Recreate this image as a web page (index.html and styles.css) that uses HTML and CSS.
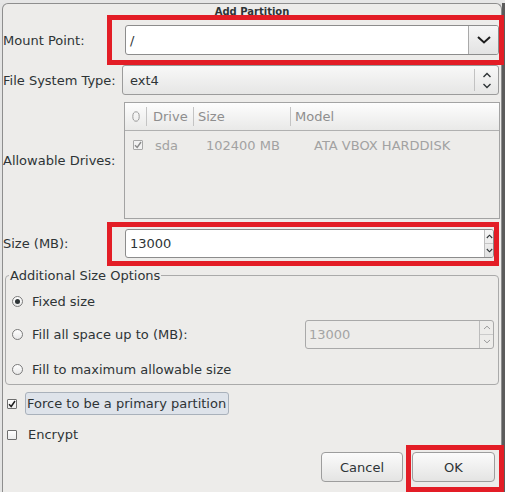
FILE: index.html
```html
<!DOCTYPE html>
<html>
<head>
<meta charset="utf-8">
<title>Add Partition</title>
<link rel="stylesheet" href="styles.css">
</head>
<body>
<div class="screen">
  <div class="topstrip"></div>
  <div class="main">
    <div class="dialog">
      <div class="title">Add Partition</div>
      <div class="form">
        <div class="row r-mount">
          <div class="label">Mount Point:</div>
          <div class="combo-entry">
            <div class="entry-text">/</div>
            <div class="combo-btn">
              <svg width="14" height="8" viewBox="0 0 14 8"><polyline points="1,1 7,6.5 13,1" fill="none" stroke="#1e1e1e" stroke-width="2"/></svg>
            </div>
          </div>
        </div>
        <div class="row r-fs">
          <div class="label">File System Type:</div>
          <div class="combo">
            <div class="combo-text">ext4</div>
            <div class="combo-sep"></div>
            <div class="combo-arrows">
              <svg width="10" height="17" viewBox="0 0 10 17"><polyline points="1.5,5 5,1.5 8.5,5" fill="none" stroke="#2e3436" stroke-width="1.4"/><polyline points="1.5,12 5,15.5 8.5,12" fill="none" stroke="#2e3436" stroke-width="1.4"/></svg>
            </div>
          </div>
        </div>
        <div class="row r-tree">
          <div class="label">Allowable Drives:</div>
          <div class="tree">
            <div class="thead">
              <div class="hc hc1"><svg width="8" height="11" viewBox="0 0 8 11"><ellipse cx="4" cy="5.5" rx="3.2" ry="4.7" fill="none" stroke="#9a9a9a" stroke-width="1"/></svg></div>
              <div class="hsep"></div>
              <div class="hc hc2">Drive</div>
              <div class="hsep"></div>
              <div class="hc hc3">Size</div>
              <div class="hsep"></div>
              <div class="hc hc4">Model</div>
            </div>
            <div class="trow">
              <div class="tc tc1"><span class="cb cb-dis"><svg width="8" height="8" viewBox="0 0 8 8"><polyline points="1,4.2 3.2,6.5 7,1" fill="none" stroke="#8a8a8a" stroke-width="1.4"/></svg></span></div>
              <div class="tc tc2">sda</div>
              <div class="tc tc3">102400 MB</div>
              <div class="tc tc4">ATA VBOX HARDDISK</div>
            </div>
          </div>
        </div>
        <div class="row r-size">
          <div class="label">Size (MB):</div>
          <div class="spin">
            <div class="spin-text">13000</div>
            <div class="spin-btns">
              <div class="sb"><svg width="7" height="5" viewBox="0 0 7 5"><polyline points="0.8,4 3.5,1.2 6.2,4" fill="none" stroke="#2e3436" stroke-width="1.1"/></svg></div>
              <div class="sb sb-down"><svg width="7" height="5" viewBox="0 0 7 5"><polyline points="0.8,1 3.5,3.8 6.2,1" fill="none" stroke="#2e3436" stroke-width="1.1"/></svg></div>
            </div>
          </div>
        </div>
        <fieldset class="frame">
          <legend>Additional Size Options</legend>
          <div class="opt opt1"><span class="radio checked"></span><span class="opt-text">Fixed size</span></div>
          <div class="opt opt2"><span class="radio"></span><span class="opt-text">Fill all space up to (MB):</span>
            <div class="spin-dis">
              <div class="spin-dis-text">13000</div>
              <div class="spin-dis-btns">
                <div class="sdb"><svg width="8" height="5" viewBox="0 0 8 5"><polyline points="1,4 4,1.2 7,4" fill="none" stroke="#9a9a9a" stroke-width="1"/></svg></div>
                <div class="sdb sdb-down"><svg width="8" height="5" viewBox="0 0 8 5"><polyline points="1,1 4,3.8 7,1" fill="none" stroke="#9a9a9a" stroke-width="1"/></svg></div>
              </div>
            </div>
          </div>
          <div class="opt opt3"><span class="radio"></span><span class="opt-text">Fill to maximum allowable size</span></div>
        </fieldset>
        <div class="chk chk-force">
          <span class="cb"><svg width="8" height="8" viewBox="0 0 8 8"><polyline points="1,4.2 3.2,6.5 7,1" fill="none" stroke="#1e1e1e" stroke-width="1.5"/></svg></span>
          <span class="chk-label focus">Force to be a primary partition</span>
        </div>
        <div class="chk chk-enc">
          <span class="cb"></span>
          <span class="chk-label">Encrypt</span>
        </div>
        <div class="buttons">
          <div class="btn btn-cancel">Cancel</div>
          <div class="btn btn-ok">OK</div>
        </div>
      </div>
    </div>
    <div class="rstrip"></div>
  </div>
  <div class="annot annot-mount"></div>
  <div class="annot annot-size"></div>
  <div class="annot annot-ok"></div>
</div>
</body>
</html>
```

FILE: styles.css
```css
* { box-sizing: border-box; }
html, body { margin: 0; padding: 0; }
body {
  font-family: "DejaVu Sans", "Liberation Sans", sans-serif;
  font-size: 13px;
  color: #2e3436;
  background: #e2e2e2;
}
.screen {
  position: relative;
  width: 505px;
  height: 492px;
  overflow: hidden;
  display: flex;
  flex-direction: column;
  background: #e4e4e4;
}
.topstrip { height: 3px; flex: none; background: #e6e6e6; }
.main { flex: 1; display: flex; min-height: 0; }
.dialog {
  width: 500px;
  flex: none;
  margin-left: 2px;
  border: 1px solid #8e8e8e;
  border-bottom: none;
  border-radius: 6px 6px 0 0;
  background: #edecea;
  display: flex;
  flex-direction: column;
}
.rstrip { flex: 1; background: #5c5c5c; }

.title {
  height: 17px;
  padding-top: 2px;
  line-height: 12px;
  font-size: 10px;
  font-weight: bold;
  text-align: center;
  color: #2e3436;
}

.form { display: flex; flex-direction: column; padding-right: 2px; }
.row { display: flex; align-items: center; }
.label { width: 122px; flex: none; line-height: 15px; }

.r-mount { margin-top: 4px; height: 30px; }
.combo-entry {
  flex: 1;
  height: 30px;
  display: flex;
  border: 1px solid #8c8c8c;
  border-radius: 3px;
  background: #ffffff;
  overflow: hidden;
}
.entry-text { flex: 1; padding-left: 4px; display: flex; align-items: center; }
.combo-btn {
  width: 30px;
  border-left: 1px solid #a9a9a9;
  background: linear-gradient(#f6f6f6, #e3e3e3);
  display: flex;
  align-items: center;
  justify-content: center;
  padding-left: 1px;
}

.r-fs { margin-top: 10px; height: 30px; }
.combo {
  flex: 1;
  margin-left: -3px;
  height: 30px;
  display: flex;
  border: 1px solid #9b9b9b;
  border-radius: 3px;
  background: linear-gradient(#f8f8f8, #e6e6e5);
}
.combo-text { flex: 1; padding-left: 7px; display: flex; align-items: center; }
.combo-sep { width: 1px; background: #c2c2c2; margin: 3px 0; }
.combo-arrows { width: 23px; display: flex; align-items: center; justify-content: center; }

.r-tree { margin-top: 7px; height: 117px; }
.tree {
  flex: 1;
  margin-left: -1px;
  margin-right: -1px;
  height: 117px;
  border: 1px solid #a3a3a3;
  background: #edecea;
}
.thead {
  height: 28px;
  display: flex;
  align-items: center;
  border-bottom: 1px solid #b0b0b0;
  background: linear-gradient(#fdfdfd, #e9e9e8);
  color: #8e8e8e;
}
.hc { height: 100%; display: flex; align-items: center; }
.hc1 { width: 21px; justify-content: center; padding-left: 1px; }
.hc2 { width: 46px; padding-left: 6px; }
.hc3 { width: 96px; padding-left: 4px; }
.hc4 { flex: 1; padding-left: 4px; }
.hsep { width: 1px; height: 19px; background: #c4c4c4; }
.trow { height: 28px; display: flex; align-items: center; color: #a2a2a2; }
.tc { display: flex; align-items: center; }
.tc1 { width: 30px; padding-left: 8px; }
.tc2 { width: 51px; }
.tc3 { width: 108px; }
.tc4 { flex: 1; }

.cb {
  width: 10px;
  height: 10px;
  flex: none;
  border: 1px solid #6e6e6e;
  border-radius: 1px;
  background: linear-gradient(#ffffff, #ececec);
  display: flex;
  align-items: center;
  justify-content: center;
}
.cb-dis { border-color: #a8a8a8; background: #f2f2f2; }

.r-size { margin-top: 10px; height: 29px; }
.spin {
  flex: 1;
  margin-right: 5px;
  height: 29px;
  display: flex;
  border: 1px solid #8c8c8c;
  border-radius: 3px;
  background: #ffffff;
  overflow: hidden;
}
.spin-text { flex: 1; padding-left: 4px; display: flex; align-items: center; }
.spin-btns {
  width: 9px;
  border-left: 1px solid #bdbdbd;
  background: linear-gradient(#f5f5f5, #e2e2e2);
  display: flex;
  flex-direction: column;
}
.sb { flex: 1; display: flex; align-items: center; justify-content: center; }
.sb-down { border-top: 1px solid #c6c6c6; }

.frame {
  margin: 10px 0 0 2px;
  padding: 0 0 3px 0;
  min-width: 0;
  border: 1px solid #aaaaaa;
  border-radius: 4px;
  display: flex;
  flex-direction: column;
}
.frame legend {
  margin-left: 3px;
  padding: 0 1px;
  line-height: 15px;
  font-size: 13px;
}
.opt { display: flex; align-items: center; padding-left: 6px; }
.opt1 { margin-top: 6px; height: 24px; }
.opt2 { margin-top: 7px; height: 29px; }
.opt3 { margin-top: 8px; height: 24px; }
.opt-text { margin-left: 9px; }
.radio {
  width: 11px;
  height: 11px;
  flex: none;
  border: 1px solid #7b7b7b;
  border-radius: 50%;
  background: linear-gradient(#ffffff, #e8e8e8);
  display: flex;
  align-items: center;
  justify-content: center;
}
.radio.checked::after {
  content: "";
  width: 5px;
  height: 5px;
  border-radius: 50%;
  background: #2e3436;
}
.spin-dis {
  margin-left: auto;
  margin-right: 4px;
  width: 189px;
  height: 29px;
  display: flex;
  border: 1px solid #a9a9a9;
  border-radius: 3px;
  background: #edecea;
  overflow: hidden;
}
.spin-dis-text { flex: 1; padding-left: 3px; display: flex; align-items: center; color: #a4a4a4; }
.spin-dis-btns {
  width: 14px;
  border-left: 1px solid #bcbcbc;
  display: flex;
  flex-direction: column;
}
.sdb { flex: 1; display: flex; align-items: center; justify-content: center; }
.sdb-down { border-top: 1px solid #cbcbcb; }

.chk { display: flex; align-items: center; padding-left: 4px; height: 23px; }
.chk-force { margin-top: 7px; }
.chk-enc { margin-top: 8px; }
.chk-label { margin-left: 9px; padding: 0 2px 0 1px; line-height: 21px; border: 1px solid transparent; border-radius: 3px; }
.chk-label.focus {
  margin-left: 8px;
  background: #dee3ea;
  border-color: #a9b1bb;
}

.buttons {
  margin-top: 6px;
  display: flex;
  justify-content: flex-end;
  gap: 9px;
  padding-right: 4px;
}
.btn {
  height: 30px;
  border: 1px solid #9d9d9d;
  border-radius: 4px;
  background: linear-gradient(#fbfbfb, #e4e4e3);
  display: flex;
  align-items: center;
  justify-content: center;
}
.btn-cancel { width: 82px; }
.btn-ok { width: 83px; }

.annot { position: absolute; border: 5px solid #e31d26; }
.annot-mount { left: 107px; top: 15px; width: 397px; height: 50px; }
.annot-size { left: 107px; top: 222px; width: 392px; height: 44px; }
.annot-ok { left: 406px; top: 445px; width: 98px; height: 47px; }
```
